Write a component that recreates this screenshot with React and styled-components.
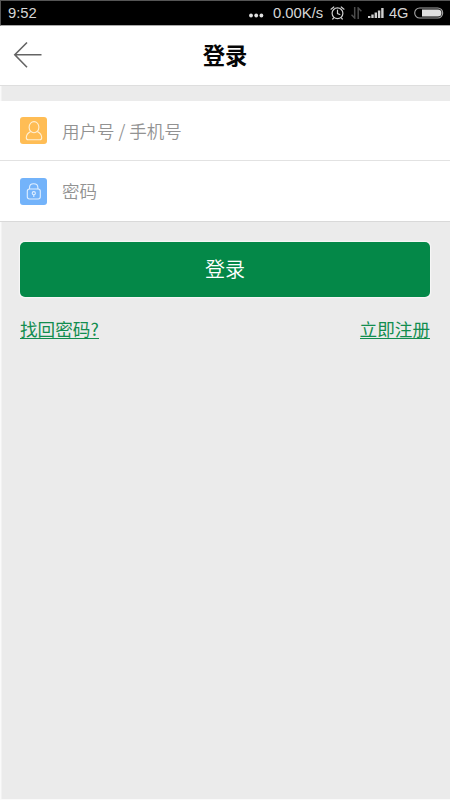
import React from "react";
import styled, { createGlobalStyle } from "styled-components";

const GlobalStyle = createGlobalStyle`
  * { box-sizing: border-box; }
  body { margin: 0; background: #ebebeb; font-family: "Noto Sans CJK SC", sans-serif; }
`;

const Screen = styled.div`
  width: 450px;
  height: 800px;
  display: flex;
  flex-direction: column;
  overflow: hidden;
  background: #ebebeb;
  box-shadow: inset 2px 0 0 -0.5px #fafafa, inset 0 -1px 0 #fafafa;
`;

const StatusBar = styled.div`
  flex: none;
  height: 26px;
  padding: 0 6px 0 7px;
  display: flex;
  align-items: center;
  background: #000;
  border: solid #555;
  border-width: 1px 0 0 1px;
  border-bottom: 1px solid #aaa;
  color: #d6d6d6;
  font: 14.8px/24px "Liberation Sans", sans-serif;
`;

const Clock = styled.span`
  flex: 1;
`;

const Dots = styled.svg`
  margin-right: 9px;
`;

const Speed = styled.span`
  width: 51px;
  margin-right: 6px;
  white-space: nowrap;
`;

const StatusIcon = styled.svg`
  margin-right: ${(p) => p.$gap}px;
`;

const Network = styled.span`
  width: 20px;
  margin-right: 5px;
  font-size: 14.6px;
`;

const Header = styled.header`
  flex: none;
  height: 60px;
  display: grid;
  grid-template-columns: 60px 1fr 60px;
  align-items: center;
  background: #fff;
  border-bottom: 1px solid #dedede;
`;

const BackButton = styled.button`
  height: 40px;
  padding: 0 0 1px 13px;
  border: 0;
  background: none;
  display: flex;
  align-items: center;
`;

const Title = styled.h1`
  margin: 0;
  padding-bottom: 4px;
  text-align: center;
  font-size: 22.3px;
  line-height: 32px;
  font-weight: 700;
  color: #050505;
`;

const Form = styled.form`
  margin: 15px 0 0;
`;

const Field = styled.label`
  height: ${(p) => p.$height}px;
  padding-left: 20px;
  display: flex;
  align-items: center;
  background: #fff;
  border-bottom: 1px solid ${(p) => p.$line};
`;

const Badge = styled.span`
  width: 27px;
  height: 27px;
  margin-right: 15px;
  border-radius: 3px;
  background: ${(p) => p.$color};
  display: flex;
`;

const Placeholder = styled.span`
  font-size: 17.5px;
  line-height: 28px;
  font-weight: 350;
  color: #929292;
  white-space: pre;
`;

const Submit = styled.button`
  display: block;
  width: 410px;
  height: 55px;
  margin: 20px 20px 0;
  padding: 0 0 1px;
  border: 0;
  border-radius: 5px;
  background: #048848;
  box-shadow: 0 0 1px 0.5px #f8f8f8;
  color: #fff;
  font: 350 20px/28px "Noto Sans CJK SC", sans-serif;
`;

const Links = styled.nav`
  margin: 19px 20px 0;
  display: flex;
  justify-content: space-between;
`;

const Link = styled.a`
  height: 23px;
  font-size: 17.6px;
  line-height: 26px;
  color: #128d4f;
  border-bottom: 1px solid #128d4f;
`;

export default function App() {
  return (
    <>
      <GlobalStyle />
      <Screen>
        <StatusBar>
          <Clock>9:52</Clock>
          <Dots width="15" height="10" viewBox="0 -4 15 10" fill="#e2e2e2">
            <circle cx="2" cy="3.5" r="1.9" />
            <circle cx="7.2" cy="3.5" r="1.9" />
            <circle cx="12.4" cy="3.5" r="1.9" />
          </Dots>
          <Speed>0.00K/s</Speed>
          <StatusIcon $gap={6} width="15" height="16" viewBox="0 0 15 16" fill="none" stroke="#cfcfcf" strokeWidth="1.2" strokeLinecap="round">
            <circle cx="7.5" cy="8.3" r="5.4" />
            <path d="M7.5 5.2v3.3l2.3 1M1 4.2 3.8 2M14 4.2 11.2 2M3.7 12.8l-1 1.2M11.3 12.8l1 1.2" />
          </StatusIcon>
          <StatusIcon $gap={6} width="11" height="12" viewBox="0 0 11 12" fill="none" stroke="#4c4c4c" strokeWidth="1.5">
            <path d="M3.7 0v11L.5 7.7M7.2 12V1l3.2 3.3" />
          </StatusIcon>
          <StatusIcon $gap={5} width="16" height="12" viewBox="0 0 16 12" fill="#d0d0d0">
            <path d="M0 9h2.4v2H0zM3.3 7.5h2.4V11H3.3zM6.6 5.5H9V11H6.6zM9.9 3.5h2.4V11H9.9zM13.2 1h2.4v10h-2.4z" />
          </StatusIcon>
          <Network>4G</Network>
          <svg width="30" height="12" viewBox="0 0 30 12">
            <rect x=".7" y="1" width="28" height="10" rx="5" fill="none" stroke="#a6a6a6" strokeWidth="1.1" />
            <path d="M8 2.5h16a3.5 3.5 0 0 1 0 7H8z" fill="#e0e0e0" />
          </svg>
        </StatusBar>
        <Header>
          <BackButton type="button" aria-label="返回">
            <svg width="30" height="28" viewBox="0 0 30 28" fill="none" stroke="#646464" strokeWidth="1.6">
              <path d="M1.5 13.8h27M14 1.5 1.8 13.8 14 26.2" />
            </svg>
          </BackButton>
          <Title>登录</Title>
        </Header>
        <Form>
          <Field $height={60} $line="#e2e2e2">
            <Badge $color="#ffbd55">
              <svg width="27" height="27" viewBox="0 0 27 27" fill="none" stroke="#fff0d5" strokeWidth="1.1">
                <ellipse cx="14" cy="10.2" rx="4.9" ry="5.6" />
                <path d="M10.7 14.5C7.7 16 6.3 18 6.3 20.7c0 1.5.6 2 2 2h11.4c1.4 0 2-.5 2-2 0-2.7-1.4-4.7-4.4-6.2" />
              </svg>
            </Badge>
            <Placeholder>用户号 / 手机号</Placeholder>
          </Field>
          <Field $height={61} $line="#d9d9d9">
            <Badge $color="#73b3fa">
              <svg width="27" height="27" viewBox="0 0 27 27" fill="none" stroke="#e0efff" strokeWidth="1.1">
                <rect x="7.3" y="11" width="13" height="10" rx="2.2" />
                <path d="M9.5 11V9.7c0-2.3 1.7-3.9 4.1-3.9s4.3 1.6 4.3 3.9V11" />
                <circle cx="13.8" cy="15.2" r="1.6" />
                <path d="M13.8 16.8v2.2" />
              </svg>
            </Badge>
            <Placeholder>密码</Placeholder>
          </Field>
          <Submit type="button">登录</Submit>
        </Form>
        <Links>
          <Link>找回密码?</Link>
          <Link>立即注册</Link>
        </Links>
      </Screen>
    </>
  );
}
